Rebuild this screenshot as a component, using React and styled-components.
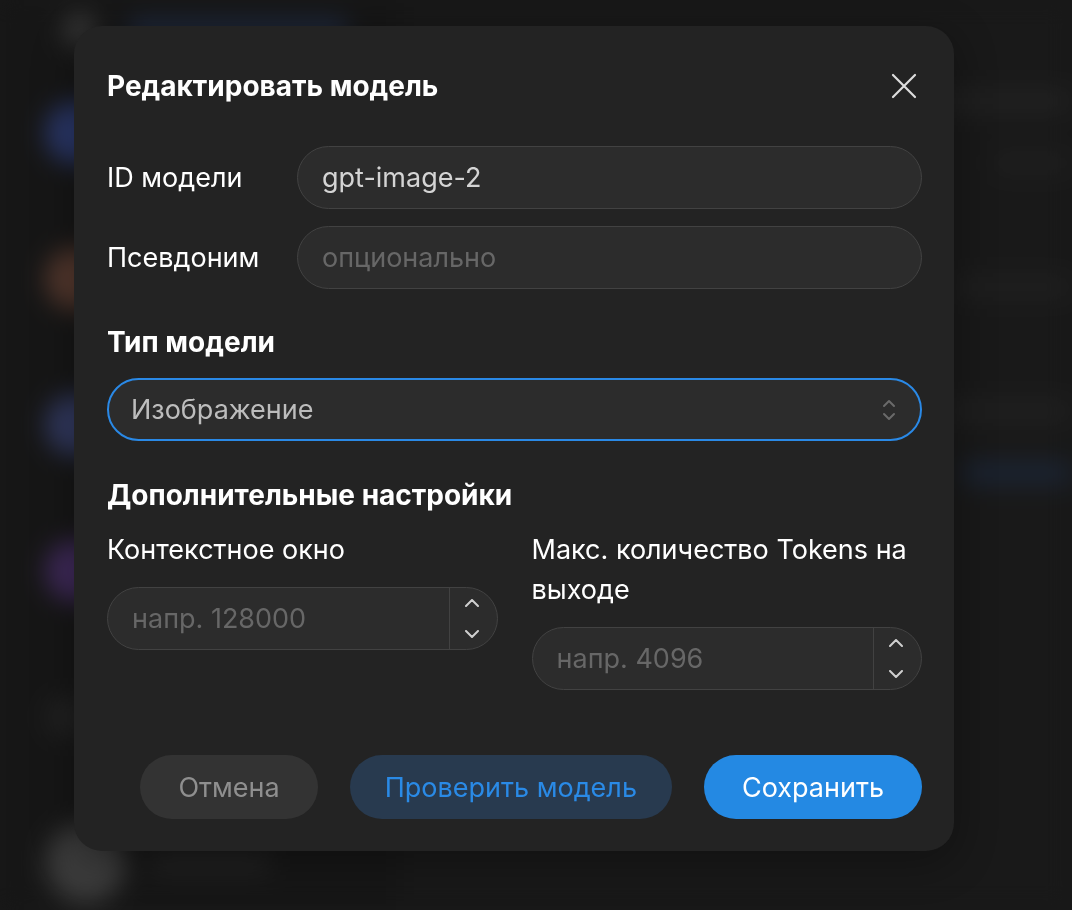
import React from "react";
import styled, { createGlobalStyle } from "styled-components";

const GlobalStyle = createGlobalStyle`
  html, body {
    margin: 0;
    height: 100%;
    background: #1f1f1f;
  }
  body {
    font-family: Inter, "Noto Sans", sans-serif;
    -webkit-font-smoothing: antialiased;
  }
  #root {
    height: 100%;
  }
  * {
    box-sizing: border-box;
  }
`;

/* blurred page behind the dialog */
const Page = styled.div`
  display: flex;
  height: 100vh;
  overflow: hidden;
  background: #212121;
  filter: blur(12px);
`;

const Sidebar = styled.div`
  width: 400px;
  display: flex;
  flex-direction: column;
  background: #1d1d1d;
`;

const TopBar = styled.div`
  flex-shrink: 0;
  height: 60px;
  display: flex;
  align-items: center;
  gap: 30px;
  padding-left: 62px;
`;

const Dot = styled.div`
  width: 36px;
  height: 36px;
  border-radius: 50%;
  background: #4a4a4a;
`;

const Bar = styled.div`
  height: 22px;
  width: ${(p) => p.$w}px;
  border-radius: 8px;
  background: ${(p) => p.$c || "#2f2f2f"};
`;

const ChatItem = styled.div`
  flex-shrink: 0;
  height: 146px;
  display: flex;
  align-items: center;
  gap: 24px;
  padding-left: 46px;
  &:first-of-type {
    margin-top: 17px;
  }
`;

const Avatar = styled.div`
  width: ${(p) => p.$s || 62}px;
  height: ${(p) => p.$s || 62}px;
  border-radius: 50%;
  background: ${(p) => p.$c};
`;

const Main = styled.div`
  flex: 1;
  display: flex;
  flex-direction: column;
  align-items: flex-end;
  gap: 40px;
  padding-top: 90px;
`;

/* dialog */
const Overlay = styled.div`
  position: fixed;
  inset: 0;
  background: rgba(12, 12, 12, 0.35);
  display: flex;
  align-items: flex-start;
  padding: 26px 0 0 74px;
`;

const Modal = styled.div`
  width: 880px;
  padding: 40px 32px 32px 33px;
  background: #232323;
  border-radius: 28px;
  box-shadow: 0 10px 40px rgba(0, 0, 0, 0.35);
  color: #fff;
`;

const Header = styled.div`
  display: flex;
  align-items: center;
  justify-content: space-between;
  height: 40px;
`;

const Title = styled.h2`
  margin: 0;
  font-size: 28px;
  font-weight: 700;
  line-height: 40px;
`;

const CloseButton = styled.button`
  width: 26px;
  height: 26px;
  margin-right: 5px;
  padding: 0;
  border: none;
  background: none;
  display: flex;
  align-items: center;
  justify-content: center;
  cursor: pointer;
`;

const FieldRow = styled.div`
  display: grid;
  grid-template-columns: 190px 1fr;
  align-items: center;
  margin-top: ${(p) => p.$mt}px;
`;

const Label = styled.label`
  font-size: 27px;
  line-height: 40px;
  color: #fff;
`;

const TextInput = styled.input`
  width: 100%;
  height: 63px;
  padding: 0 24px;
  border: 1.5px solid #424242;
  border-radius: 32px;
  background: #2c2c2c;
  color: #d4d4d4;
  font-family: inherit;
  font-size: 27px;
  outline: none;
  &::placeholder {
    color: #676767;
  }
`;

const Heading = styled.h3`
  margin: ${(p) => p.$mt}px 0 0;
  font-size: 28px;
  font-weight: 700;
  line-height: 40px;
`;

const SelectBox = styled.div`
  margin-top: 16px;
  height: 63px;
  display: flex;
  align-items: center;
  justify-content: space-between;
  padding: 0 24px 0 22px;
  border: 2px solid #2a89e6;
  border-radius: 32px;
  background: #2c2c2c;
  color: #bdbdbd;
  font-size: 27px;
  cursor: pointer;
`;

const Columns = styled.div`
  display: grid;
  grid-template-columns: minmax(0, 1fr) minmax(0, 1fr);
  gap: 34px;
  margin-top: 15px;
  align-items: start;
`;

const Column = styled.div`
  display: flex;
  flex-direction: column;
  gap: 17px;
`;

const NumberBox = styled.div`
  height: 63px;
  display: flex;
  border: 1.5px solid #424242;
  border-radius: 32px;
  background: #2c2c2c;
  overflow: hidden;
`;

const NumberInput = styled.input`
  flex: 1;
  min-width: 0;
  padding: 0 24px;
  border: none;
  background: transparent;
  color: #d4d4d4;
  font-family: inherit;
  font-size: 27px;
  outline: none;
  &::placeholder {
    color: #676767;
  }
`;

const Stepper = styled.div`
  width: 48px;
  display: flex;
  flex-direction: column;
  border-left: 1.5px solid #424242;
`;

const StepButton = styled.button`
  flex: 1;
  border: none;
  background: none;
  padding: 0 3px 0 0;
  display: flex;
  align-items: center;
  justify-content: center;
  cursor: pointer;
`;

const Footer = styled.div`
  display: flex;
  justify-content: flex-end;
  gap: 32px;
  margin-top: 65px;
`;

const variants = {
  ghost: "background:#333333;color:#8f8f8f;padding:0 38px;",
  soft: "background:#283a4f;color:#2a8ae6;padding:0 35px;",
  primary: "background:#2489e3;color:#ffffff;padding:0 38px;",
};

const Button = styled.button`
  height: 64px;
  border: none;
  border-radius: 32px;
  font-family: inherit;
  font-size: 27px;
  cursor: pointer;
  ${(p) => variants[p.$variant]}
`;

const Chevron = ({ up, color = "#cfcfcf", w = 2 }) => (
  <svg width="14" height="8" viewBox="0 0 14 8" fill="none">
    <path
      d={up ? "M1 7 L7 1 L13 7" : "M1 1 L7 7 L13 1"}
      stroke={color}
      strokeWidth={w}
      strokeLinecap="round"
      strokeLinejoin="round"
    />
  </svg>
);

const UpDownIcon = () => (
  <svg width="14" height="24" viewBox="0 0 14 24" fill="none">
    <path d="M2 8 L7 3 L12 8" stroke="#6a6a6a" strokeWidth="2" strokeLinecap="round" strokeLinejoin="round" />
    <path d="M2 16 L7 21 L12 16" stroke="#6a6a6a" strokeWidth="2" strokeLinecap="round" strokeLinejoin="round" />
  </svg>
);

const NumberField = ({ placeholder }) => (
  <NumberBox>
    <NumberInput type="text" placeholder={placeholder} />
    <Stepper>
      <StepButton>
        <Chevron up />
      </StepButton>
      <StepButton>
        <Chevron />
      </StepButton>
    </Stepper>
  </NumberBox>
);

const chats = [
  { c: "#3b4f9c", w: [220, 160] },
  { c: "#7b5040", w: [200, 140] },
  { c: "#46518c", w: [230, 120] },
  { c: "#5b3a84", w: [190, 170] },
  { c: "#2e2e2e", s: 40, w: [0, 0] },
  { c: "#565656", s: 80, w: [120, 0] },
];

export default function App() {
  return (
    <>
      <GlobalStyle />
      <Page>
        <Sidebar>
          <TopBar>
            <Dot />
            <Bar $w={220} $c="#2b3b5c" />
          </TopBar>
          {chats.map((ch, i) => (
            <ChatItem key={i}>
              <Avatar $c={ch.c} $s={ch.s} />
              {ch.w[0] > 0 && <Bar $w={ch.w[0]} />}
            </ChatItem>
          ))}
        </Sidebar>
        <Main>
          <Bar $w={140} $c="#2d2d2d" />
          <Bar $w={80} $c="#292929" />
          <Bar $w={40} $c="#212121" />
          <Bar $w={120} $c="#2a2a2a" />
          <Bar $w={60} $c="#212121" />
          <Bar $w={130} $c="#2b2b2b" />
          <Bar $w={110} $c="#24324a" />
        </Main>
      </Page>

      <Overlay>
        <Modal>
          <Header>
            <Title>Редактировать модель</Title>
            <CloseButton aria-label="Закрыть">
              <svg width="26" height="26" viewBox="0 0 26 26" fill="none">
                <path d="M2 2 L24 24 M24 2 L2 24" stroke="#dedede" strokeWidth="2.2" strokeLinecap="round" />
              </svg>
            </CloseButton>
          </Header>

          <FieldRow $mt={40}>
            <Label>ID модели</Label>
            <TextInput type="text" defaultValue="gpt-image-2" />
          </FieldRow>
          <FieldRow $mt={17}>
            <Label>Псевдоним</Label>
            <TextInput type="text" placeholder="опционально" />
          </FieldRow>

          <Heading $mt={33}>Тип модели</Heading>
          <SelectBox>
            <span>Изображение</span>
            <UpDownIcon />
          </SelectBox>

          <Heading $mt={34}>Дополнительные настройки</Heading>
          <Columns>
            <Column>
              <Label>Контекстное окно</Label>
              <NumberField placeholder="напр. 128000" />
            </Column>
            <Column>
              <Label>Макс. количество Tokens на выходе</Label>
              <NumberField placeholder="напр. 4096" />
            </Column>
          </Columns>

          <Footer>
            <Button $variant="ghost">Отмена</Button>
            <Button $variant="soft">Проверить модель</Button>
            <Button $variant="primary">Сохранить</Button>
          </Footer>
        </Modal>
      </Overlay>
    </>
  );
}
